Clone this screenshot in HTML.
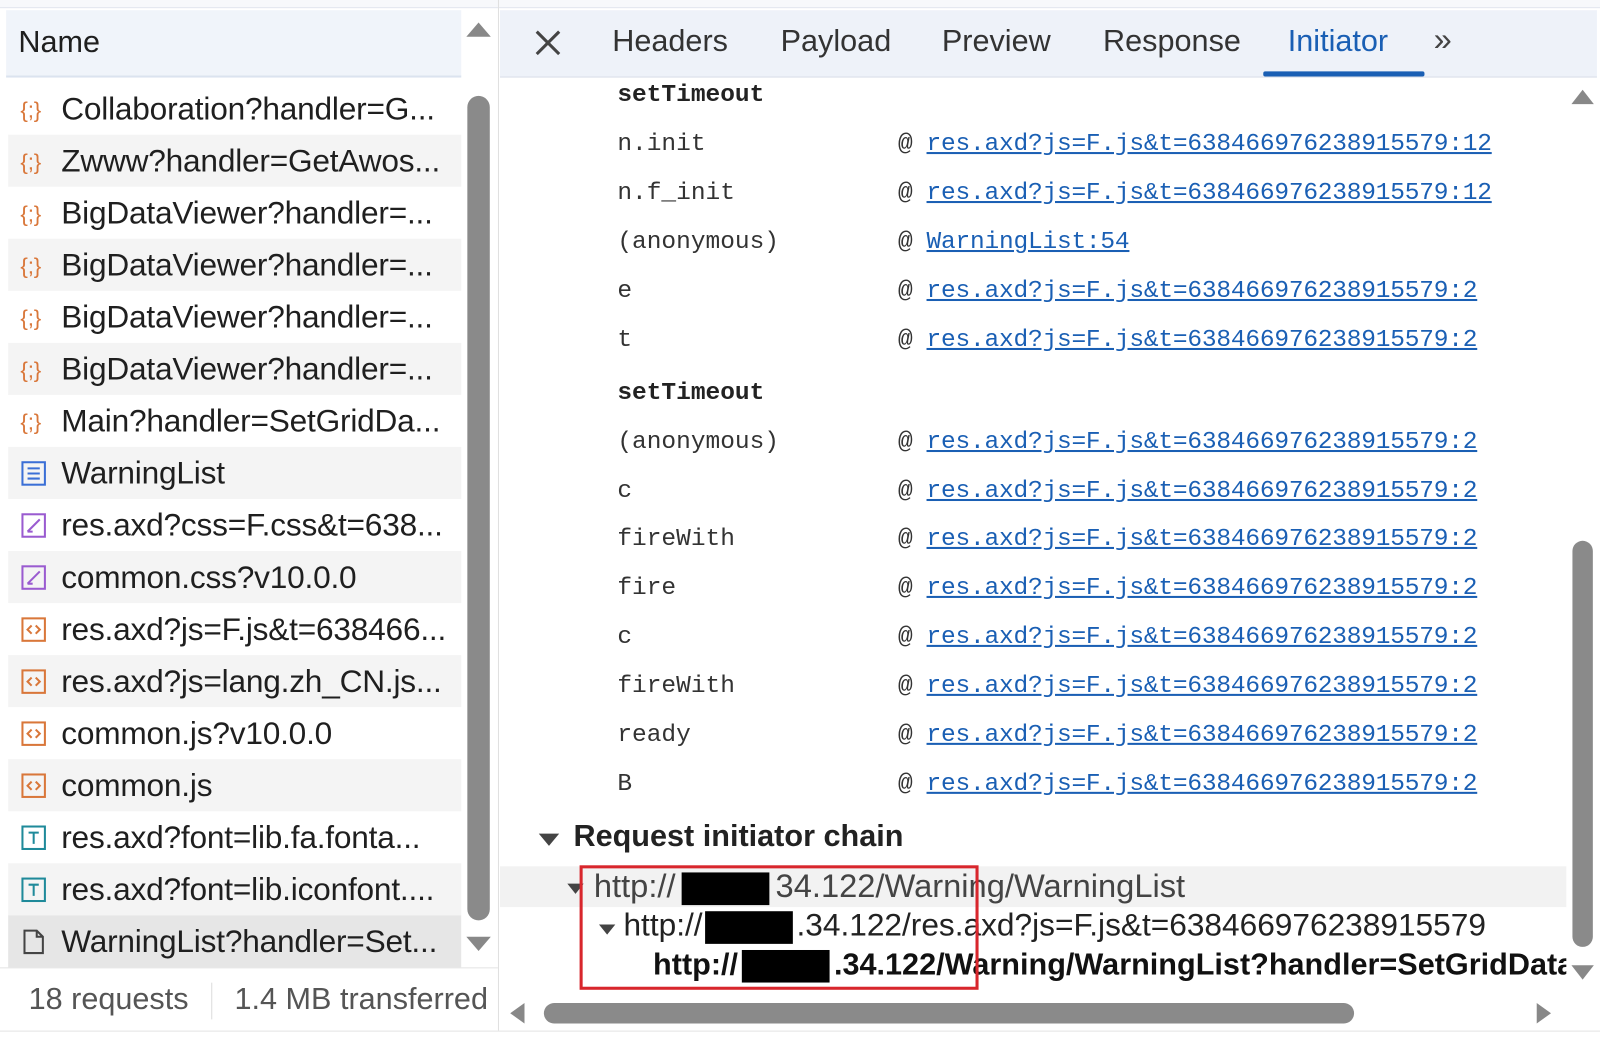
<!DOCTYPE html>
<html><head><meta charset="utf-8"><style>
*{margin:0;padding:0;box-sizing:border-box}
body{width:1600px;height:1035px;background:#fff;position:relative;overflow:hidden;font-family:"Liberation Sans",sans-serif;color:#1f1f1f}
#w{position:absolute;left:0;top:0;width:1568px;height:1015px;transform:scale(1.0204);transform-origin:0 0}
.abs{position:absolute}
.row{position:absolute;left:8px;width:444px;height:51px;font-size:31px;line-height:51px;padding-left:52px;white-space:nowrap;overflow:hidden;letter-spacing:-0.2px}
.row .ic{position:absolute;left:12px;top:13px;width:26px;height:26px}
.alt{background:#f4f4f4}
.mono{position:absolute;font-family:"Liberation Mono",monospace;font-size:24px;color:#333}
.lk{position:absolute;font-family:"Liberation Mono",monospace;font-size:24px;color:#1a5fb4;text-decoration:underline;left:908px;letter-spacing:-0.2px}
.at{position:absolute;left:880px;font-family:"Liberation Mono",monospace;font-size:24px;color:#333}
.tab{position:absolute;top:24px;font-size:30px;color:#333}
</style></head><body><div id="w">
<div class="abs" style="left:0;top:0;width:1600px;height:8px;background:#f7f8fb;border-bottom:1px solid #e2e6ee"></div>
<div class="abs" style="left:6px;top:10px;width:446px;height:66px;background:#f0f4fa;border-bottom:2px solid #dbe3ef;font-size:30px;line-height:64px;padding-left:12px">Name</div>
<div class="abs" style="left:457px;top:22px;width:0;height:0;border-left:12px solid transparent;border-right:12px solid transparent;border-bottom:14px solid #888"></div>
<div class="abs" style="left:457px;top:918px;width:0;height:0;border-left:12px solid transparent;border-right:12px solid transparent;border-top:14px solid #888"></div>
<div class="abs" style="left:458px;top:94px;width:22px;height:808px;background:#8a8a8a;border-radius:11px"></div>

<div class="row" style="top:81px"><svg class="ic" viewBox="0 0 26 26"><text x="0" y="21" font-size="22" fill="#d9773a" font-family="Liberation Sans">{;}</text></svg>Collaboration?handler=G...</div>
<div class="row alt" style="top:132px"><svg class="ic" viewBox="0 0 26 26"><text x="0" y="21" font-size="22" fill="#d9773a" font-family="Liberation Sans">{;}</text></svg>Zwww?handler=GetAwos...</div>
<div class="row" style="top:183px"><svg class="ic" viewBox="0 0 26 26"><text x="0" y="21" font-size="22" fill="#d9773a" font-family="Liberation Sans">{;}</text></svg>BigDataViewer?handler=...</div>
<div class="row alt" style="top:234px"><svg class="ic" viewBox="0 0 26 26"><text x="0" y="21" font-size="22" fill="#d9773a" font-family="Liberation Sans">{;}</text></svg>BigDataViewer?handler=...</div>
<div class="row" style="top:285px"><svg class="ic" viewBox="0 0 26 26"><text x="0" y="21" font-size="22" fill="#d9773a" font-family="Liberation Sans">{;}</text></svg>BigDataViewer?handler=...</div>
<div class="row alt" style="top:336px"><svg class="ic" viewBox="0 0 26 26"><text x="0" y="21" font-size="22" fill="#d9773a" font-family="Liberation Sans">{;}</text></svg>BigDataViewer?handler=...</div>
<div class="row" style="top:387px"><svg class="ic" viewBox="0 0 26 26"><text x="0" y="21" font-size="22" fill="#d9773a" font-family="Liberation Sans">{;}</text></svg>Main?handler=SetGridDa...</div>
<div class="row alt" style="top:438px"><svg class="ic" viewBox="0 0 26 26"><rect x="2" y="2" width="22" height="22" fill="none" stroke="#3b6fd6" stroke-width="2"/><path d="M7 8h12M7 13h12M7 18h12" stroke="#3b6fd6" stroke-width="2"/></svg>WarningList</div>
<div class="row" style="top:489px"><svg class="ic" viewBox="0 0 26 26"><rect x="2" y="2" width="22" height="22" fill="none" stroke="#9a5bd0" stroke-width="2"/><path d="M7 19L19 7M7 19h5" stroke="#9a5bd0" stroke-width="2"/></svg>res.axd?css=F.css&amp;t=638...</div>
<div class="row alt" style="top:540px"><svg class="ic" viewBox="0 0 26 26"><rect x="2" y="2" width="22" height="22" fill="none" stroke="#9a5bd0" stroke-width="2"/><path d="M7 19L19 7M7 19h5" stroke="#9a5bd0" stroke-width="2"/></svg>common.css?v10.0.0</div>
<div class="row" style="top:591px"><svg class="ic" viewBox="0 0 26 26"><rect x="2" y="2" width="22" height="22" fill="none" stroke="#d9773a" stroke-width="2"/><path d="M11 9l-4 4 4 4M15 9l4 4-4 4" fill="none" stroke="#d9773a" stroke-width="2"/></svg>res.axd?js=F.js&amp;t=638466...</div>
<div class="row alt" style="top:642px"><svg class="ic" viewBox="0 0 26 26"><rect x="2" y="2" width="22" height="22" fill="none" stroke="#d9773a" stroke-width="2"/><path d="M11 9l-4 4 4 4M15 9l4 4-4 4" fill="none" stroke="#d9773a" stroke-width="2"/></svg>res.axd?js=lang.zh_CN.js...</div>
<div class="row" style="top:693px"><svg class="ic" viewBox="0 0 26 26"><rect x="2" y="2" width="22" height="22" fill="none" stroke="#d9773a" stroke-width="2"/><path d="M11 9l-4 4 4 4M15 9l4 4-4 4" fill="none" stroke="#d9773a" stroke-width="2"/></svg>common.js?v10.0.0</div>
<div class="row alt" style="top:744px"><svg class="ic" viewBox="0 0 26 26"><rect x="2" y="2" width="22" height="22" fill="none" stroke="#d9773a" stroke-width="2"/><path d="M11 9l-4 4 4 4M15 9l4 4-4 4" fill="none" stroke="#d9773a" stroke-width="2"/></svg>common.js</div>
<div class="row" style="top:795px"><svg class="ic" viewBox="0 0 26 26"><rect x="2" y="2" width="22" height="22" fill="none" stroke="#1f8a9a" stroke-width="2"/><path d="M8 8h10M13 8v11" stroke="#1f8a9a" stroke-width="2"/></svg>res.axd?font=lib.fa.fonta...</div>
<div class="row alt" style="top:846px"><svg class="ic" viewBox="0 0 26 26"><rect x="2" y="2" width="22" height="22" fill="none" stroke="#1f8a9a" stroke-width="2"/><path d="M8 8h10M13 8v11" stroke="#1f8a9a" stroke-width="2"/></svg>res.axd?font=lib.iconfont....</div>
<div class="row" style="top:897px;background:#e6e6e6"><svg class="ic" viewBox="0 0 26 26"><path d="M4 2h12l6 6v16H4z M16 2v6h6" fill="none" stroke="#444" stroke-width="2"/></svg>WarningList?handler=Set...</div>
<div class="abs" style="left:0;top:948px;width:488px;height:62px;border-top:1px solid #e4e4e4;font-size:30px;line-height:62px;color:#555;white-space:nowrap;overflow:hidden;padding-left:28px">18 requests<span style="display:inline-block;width:1px;height:36px;background:#ddd;vertical-align:middle;margin:0 22px"></span>1.4 MB transferred</div>
<div class="abs" style="left:488px;top:0;width:1px;height:1035px;background:#e0e0e0"></div>

<div class="abs" style="left:490px;top:10px;width:1075px;height:66px;background:#eef2f9;border-bottom:1px solid #d8dee8"></div>
<svg class="abs" style="left:524px;top:29px" width="26" height="26" viewBox="0 0 26 26"><path d="M2 2L24 24M24 2L2 24" stroke="#444" stroke-width="3"/></svg>
<div class="tab" style="left:600px">Headers</div>
<div class="tab" style="left:765px">Payload</div>
<div class="tab" style="left:923px">Preview</div>
<div class="tab" style="left:1081px">Response</div>
<div class="tab" style="left:1262px;color:#1a5fb4">Initiator</div>
<div class="abs" style="left:1238px;top:70px;width:158px;height:5px;background:#1a5fb4;border-radius:2px"></div>
<div class="abs" style="top:20px;left:1405px;font-size:32px;color:#444">&raquo;</div>

<div class="mono" style="left:605px;top:80px;font-weight:bold;color:#222">setTimeout</div>
<div class="mono" style="left:605px;top:128px">n.init</div><div class="at" style="top:128px">@</div><div class="lk" style="top:128px">res.axd?js=F.js&amp;t=638466976238915579:12</div>
<div class="mono" style="left:605px;top:176px">n.f_init</div><div class="at" style="top:176px">@</div><div class="lk" style="top:176px">res.axd?js=F.js&amp;t=638466976238915579:12</div>
<div class="mono" style="left:605px;top:224px">(anonymous)</div><div class="at" style="top:224px">@</div><div class="lk" style="top:224px">WarningList:54</div>
<div class="mono" style="left:605px;top:272px">e</div><div class="at" style="top:272px">@</div><div class="lk" style="top:272px">res.axd?js=F.js&amp;t=638466976238915579:2</div>
<div class="mono" style="left:605px;top:320px">t</div><div class="at" style="top:320px">@</div><div class="lk" style="top:320px">res.axd?js=F.js&amp;t=638466976238915579:2</div>
<div class="mono" style="left:605px;top:372px;font-weight:bold;color:#222">setTimeout</div>
<div class="mono" style="left:605px;top:420px">(anonymous)</div><div class="at" style="top:420px">@</div><div class="lk" style="top:420px">res.axd?js=F.js&amp;t=638466976238915579:2</div>
<div class="mono" style="left:605px;top:468px">c</div><div class="at" style="top:468px">@</div><div class="lk" style="top:468px">res.axd?js=F.js&amp;t=638466976238915579:2</div>
<div class="mono" style="left:605px;top:515px">fireWith</div><div class="at" style="top:515px">@</div><div class="lk" style="top:515px">res.axd?js=F.js&amp;t=638466976238915579:2</div>
<div class="mono" style="left:605px;top:563px">fire</div><div class="at" style="top:563px">@</div><div class="lk" style="top:563px">res.axd?js=F.js&amp;t=638466976238915579:2</div>
<div class="mono" style="left:605px;top:611px">c</div><div class="at" style="top:611px">@</div><div class="lk" style="top:611px">res.axd?js=F.js&amp;t=638466976238915579:2</div>
<div class="mono" style="left:605px;top:659px">fireWith</div><div class="at" style="top:659px">@</div><div class="lk" style="top:659px">res.axd?js=F.js&amp;t=638466976238915579:2</div>
<div class="mono" style="left:605px;top:707px">ready</div><div class="at" style="top:707px">@</div><div class="lk" style="top:707px">res.axd?js=F.js&amp;t=638466976238915579:2</div>
<div class="mono" style="left:605px;top:755px">B</div><div class="at" style="top:755px">@</div><div class="lk" style="top:755px">res.axd?js=F.js&amp;t=638466976238915579:2</div>

<div class="abs" style="left:528px;top:817px;width:0;height:0;border-left:10px solid transparent;border-right:10px solid transparent;border-top:12px solid #444"></div>
<div class="abs" style="left:562px;top:803px;font-size:30px;font-weight:bold;color:#222">Request initiator chain</div>
<div class="abs" style="left:490px;top:849px;width:1045px;height:40px;background:#f2f2f2"></div>
<div class="abs" style="left:556px;top:866px;width:0;height:0;border-left:8px solid transparent;border-right:8px solid transparent;border-top:10px solid #444"></div>
<div class="abs" style="left:582px;top:850px;font-size:32px;color:#444;white-space:nowrap">http://<span style="display:inline-block;width:86px;height:32px;background:#000;vertical-align:middle;margin:0 6px"></span>34.122/Warning/WarningList</div>
<div class="abs" style="left:587px;top:906px;width:0;height:0;border-left:8px solid transparent;border-right:8px solid transparent;border-top:10px solid #444"></div>
<div class="abs" style="left:611px;top:889px;font-size:31px;color:#222;white-space:nowrap">http://<span style="display:inline-block;width:86px;height:32px;background:#000;vertical-align:middle;margin:0 4px 0 2px"></span>.34.122/res.axd?js=F.js&amp;t=638466976238915579</div>
<div class="abs" style="left:640px;top:929px;width:895px;overflow:hidden;font-size:30px;font-weight:bold;color:#111;white-space:nowrap">http://<span style="display:inline-block;width:86px;height:32px;background:#000;vertical-align:middle;margin:0 4px"></span>.34.122/Warning/WarningList?handler=SetGridData</div>
<div class="abs" style="left:568px;top:848px;width:391px;height:122px;border:3px solid #d8262c"></div>

<div class="abs" style="left:1540px;top:88px;width:0;height:0;border-left:11px solid transparent;border-right:11px solid transparent;border-bottom:14px solid #888"></div>
<div class="abs" style="left:1540px;top:946px;width:0;height:0;border-left:11px solid transparent;border-right:11px solid transparent;border-top:14px solid #888"></div>
<div class="abs" style="left:1541px;top:530px;width:20px;height:398px;background:#8a8a8a;border-radius:10px"></div>
<div class="abs" style="left:500px;top:983px;width:0;height:0;border-top:10px solid transparent;border-bottom:10px solid transparent;border-right:14px solid #888"></div>
<div class="abs" style="left:1506px;top:983px;width:0;height:0;border-top:10px solid transparent;border-bottom:10px solid transparent;border-left:14px solid #888"></div>
<div class="abs" style="left:533px;top:983px;width:794px;height:20px;background:#8a8a8a;border-radius:10px"></div>
<div class="abs" style="left:0;top:1010px;width:1600px;height:25px;background:#fff;border-top:1px solid #e4e4e4"></div>
</div></body></html>
